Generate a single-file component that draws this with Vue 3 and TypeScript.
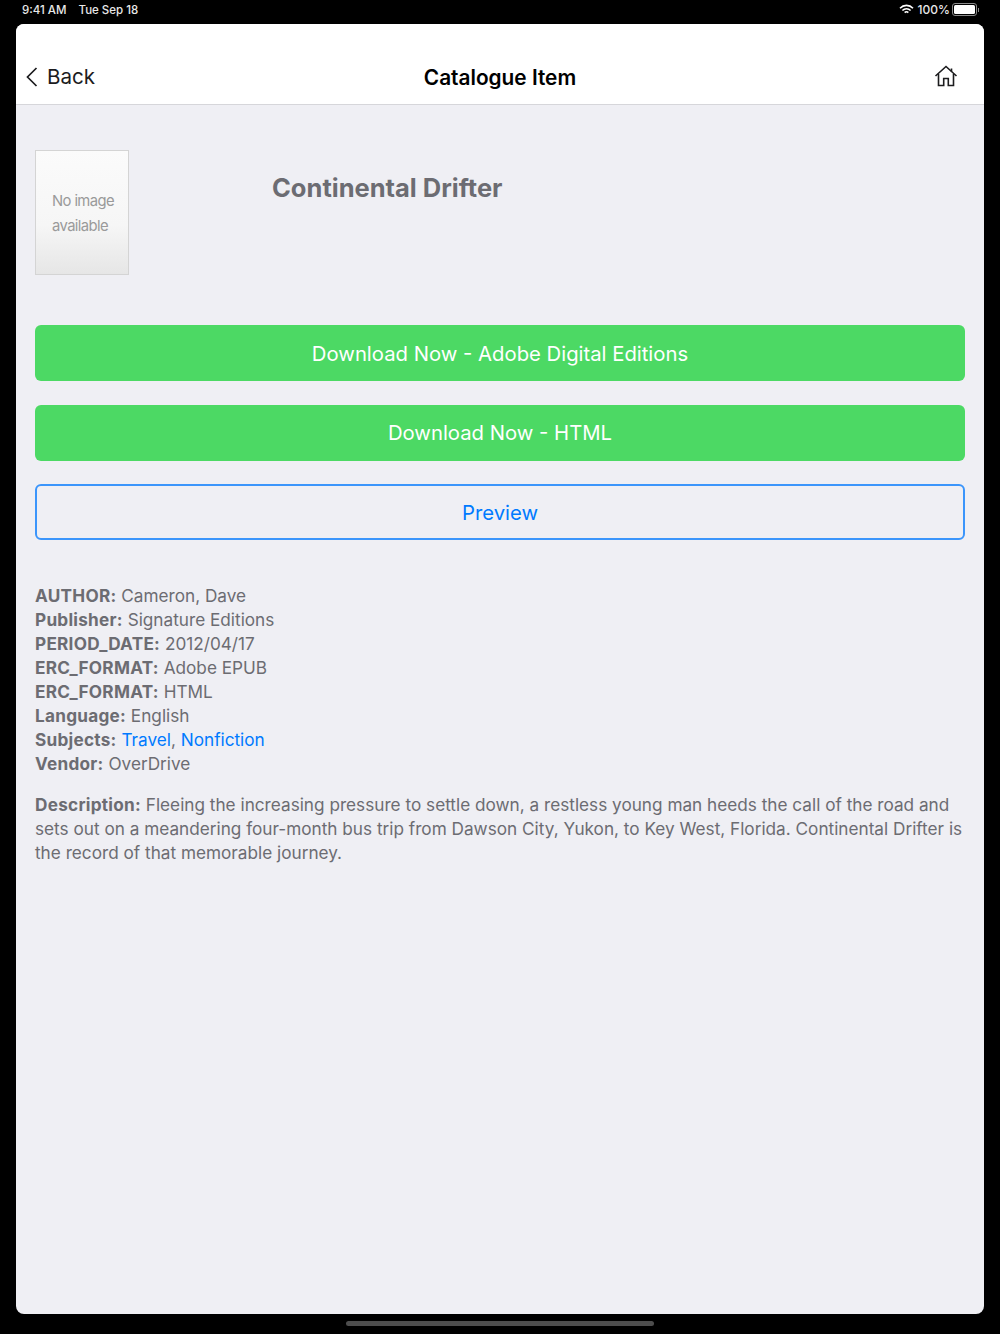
<template>
  <div class="screen">
    <header class="status">
      <div class="status-left"><span>9:41 AM</span><span>Tue Sep 18</span></div>
      <div class="status-right">
        <svg width="15" height="11" viewBox="0 0 15 11" fill="none" stroke="#fff" stroke-width="1.6">
          <path d="M1 4.2a9 9 0 0 1 13 0" />
          <path d="M3.4 6.5a5.6 5.6 0 0 1 8.2 0" />
          <path d="M5.7 8.6a2.4 2.4 0 0 1 3.6 0" />
        </svg>
        <span>100%</span>
        <span class="battery"><span class="battery-fill"></span></span>
        <span class="battery-tip"></span>
      </div>
    </header>
    <main class="sheet">
      <nav class="nav">
        <div class="back">
          <svg width="12" height="20" viewBox="0 0 12 20" fill="none" stroke="#1c1c1e" stroke-width="1.7">
            <path d="M10.5 1 1.5 10l9 9" />
          </svg>
          <span>Back</span>
        </div>
        <h1 class="nav-title">Catalogue Item</h1>
        <svg class="home" width="24" height="22" viewBox="0 0 24 22" fill="none" stroke="#1c1c1e" stroke-width="1.6">
          <path d="M1.5 11 12 1.5 22.5 11" />
          <path d="M17.5 3.5v3" />
          <path d="M4.5 9v11.5h5.2v-7h4.6v7h5.2V9" />
        </svg>
      </nav>
      <section class="content">
        <div class="hero">
          <div class="cover"><span>No image</span><span>available</span></div>
          <h2 class="book-title">Continental Drifter</h2>
        </div>
        <div class="actions">
          <button class="btn solid">Download Now - Adobe Digital Editions</button>
          <button class="btn solid">Download Now - HTML</button>
          <button class="btn outline">Preview</button>
        </div>
        <div class="meta">
          <div v-for="row in rows" :key="row.label + row.value"><b>{{ row.label }}:</b> {{ row.value }}</div>
          <div><b>Subjects:</b> <a>Travel</a>, <a>Nonfiction</a></div>
          <div><b>Vendor:</b> OverDrive</div>
        </div>
        <p class="desc"><b>Description:</b> Fleeing the increasing pressure to settle down, a restless young man heeds the call of the road and sets out on a meandering four-month bus trip from Dawson City, Yukon, to Key West, Florida. Continental Drifter is the record of that memorable journey.</p>
      </section>
    </main>
    <div class="home-bar-wrap"><div class="home-bar"></div></div>
  </div>
</template>

<script setup lang="ts">
interface Row {
  label: string
  value: string
}
const rows: Row[] = [
  { label: 'AUTHOR', value: 'Cameron, Dave' },
  { label: 'Publisher', value: 'Signature Editions' },
  { label: 'PERIOD_DATE', value: '2012/04/17' },
  { label: 'ERC_FORMAT', value: 'Adobe EPUB' },
  { label: 'ERC_FORMAT', value: 'HTML' },
  { label: 'Language', value: 'English' },
]
</script>

<style>
html, body { margin: 0; background: #000; }
</style>

<style scoped>
.screen {
  width: 1000px;
  height: 1334px;
  background: #000;
  display: flex;
  flex-direction: column;
  font-family: Inter, "Liberation Sans", sans-serif;
  overflow: hidden;
}
.status {
  height: 24px;
  flex: none;
  display: flex;
  justify-content: space-between;
  align-items: center;
  padding: 0 21px 4px 22px;
  box-sizing: border-box;
  color: #e8e8e8;
  font-size: 11.5px;
  font-weight: 500;
}
.status-left { display: flex; gap: 12px; }
.status-right { display: flex; align-items: center; gap: 4px; font-size: 12px; padding-bottom: 1px; }
.battery {
  width: 21px;
  height: 9px;
  border: 1px solid #8a8a8a;
  border-radius: 3px;
  padding: 1px;
  display: block;
  margin-left: -2px;
}
.battery-fill { display: block; width: 100%; height: 100%; background: #fff; border-radius: 1.5px; }
.battery-tip { width: 1px; height: 4px; background: #8a8a8a; margin-left: -3px; }
.sheet {
  margin: 0 16px;
  height: 1290px;
  flex: none;
  background: #efeff4;
  border-radius: 8px;
  overflow: hidden;
  display: flex;
  flex-direction: column;
}
.nav {
  height: 81px;
  flex: none;
  box-sizing: border-box;
  background: #fff;
  border-bottom: 1px solid #d6d6da;
  padding: 25px 26px 0 10px;
  display: flex;
  align-items: center;
  justify-content: space-between;
  position: relative;
  color: #111;
}
.back { display: flex; align-items: center; gap: 9px; font-size: 20.6px; color: #1c1c1e; }
.home { margin-top: -2px; }
.nav-title {
  position: absolute;
  left: 0;
  right: 0;
  top: 40px;
  margin: 0;
  text-align: center;
  font-size: 20.8px;
  line-height: 28px;
  font-weight: 600;
  color: #000;
}
.content { padding: 45px 19px 0; color: #6c6c72; font-size: 17.2px; line-height: 24px; }
.hero { display: flex; align-items: flex-start; }
.cover {
  width: 94px;
  height: 125px;
  box-sizing: border-box;
  border: 1px solid #d4d4d4;
  background: linear-gradient(#fbfbfb, #f6f6f6 60%, #e6e6e6);
  display: flex;
  flex-direction: column;
  padding: 38px 0 0 16px;
  font-size: 14.8px;
  line-height: 25px;
  letter-spacing: -0.6px;
  color: #9a9a9a;
}
.book-title { margin: 22px 0 0 143px; font-size: 25.5px; line-height: 32px; font-weight: 700; color: #6c6c72; }
.actions { display: flex; flex-direction: column; margin-top: 50px; gap: 23.5px; }
.btn {
  height: 56px;
  border-radius: 6px;
  font: inherit;
  font-size: 20.3px;
  padding: 1px 0 0;
  box-sizing: border-box;
}
.solid { background: #4cd964; color: #fff; border: none; }
.outline { background: transparent; color: #007aff; border: 2px solid #3b95fb; }
.meta { margin-top: 44px; }
.meta b, .desc b { font-weight: 700; letter-spacing: 0.25px; }
.meta a { color: #007aff; }
.desc { margin: 17px 0 0; }
.home-bar-wrap { flex: 1; display: flex; justify-content: center; padding-top: 7px; }
.home-bar { width: 308px; height: 5px; border-radius: 3px; background: #4d4d4d; }
</style>
